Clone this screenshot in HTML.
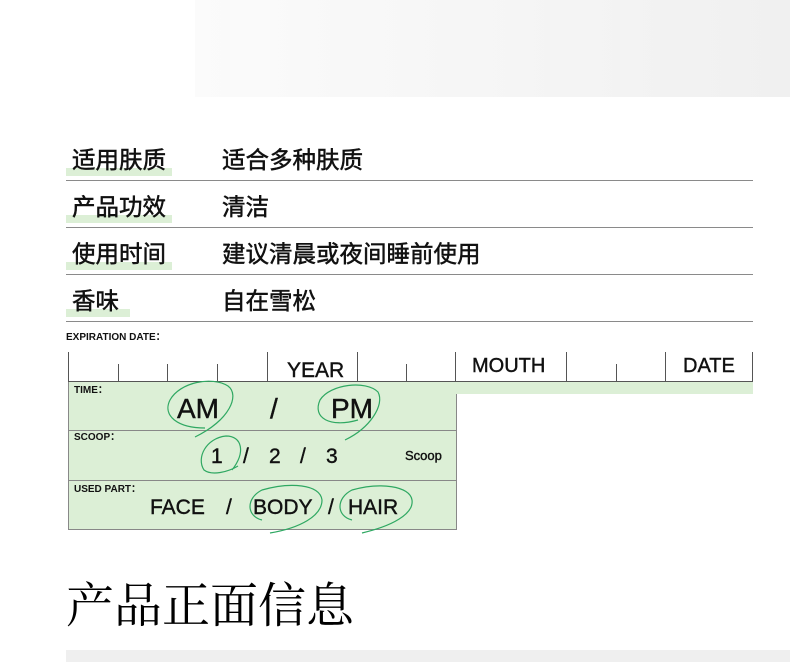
<!DOCTYPE html>
<html><head><meta charset="utf-8"><style>
*{margin:0;padding:0;box-sizing:border-box}
body{width:790px;height:662px;background:#fff;position:relative;overflow:hidden;font-family:"Liberation Sans","Noto Sans CJK SC",sans-serif;color:#111}
.a{position:absolute}
.hl{position:absolute;height:8px;background:#dcefd6}
.lbl,.val{position:absolute;font-size:23.5px;font-weight:normal;line-height:1;-webkit-text-stroke:0.5px #111}
.lbl{left:72px}.val{left:222px}
.ln{position:absolute;left:66px;width:687px;height:1px;background:#8a8a8a}
.v{position:absolute;width:1px;background:#555}
.t{position:absolute;font-size:21px;line-height:1;font-family:"Liberation Sans",sans-serif;font-weight:normal;color:#111;-webkit-text-stroke:0.4px #111}
.s{position:absolute;font-size:10px;line-height:1;font-weight:bold}
</style></head><body>
<div class="a" style="left:195px;top:0;width:595px;height:97px;background:linear-gradient(90deg,#fbfbfb,#f0f0f0)"></div>

<div class="hl" style="left:66px;top:168px;width:106px"></div>
<div class="hl" style="left:66px;top:215px;width:106px"></div>
<div class="hl" style="left:66px;top:262px;width:106px"></div>
<div class="hl" style="left:66px;top:309px;width:64px"></div>
<div class="lbl" style="top:149px">适用肤质</div><div class="val" style="top:149px">适合多种肤质</div>
<div class="ln" style="top:180px"></div>
<div class="lbl" style="top:196px">产品功效</div><div class="val" style="top:196px">清洁</div>
<div class="ln" style="top:227px"></div>
<div class="lbl" style="top:243px">使用时间</div><div class="val" style="top:243px">建议清晨或夜间睡前使用</div>
<div class="ln" style="top:274px"></div>
<div class="lbl" style="top:290px">香味</div><div class="val" style="top:290px">自在雪松</div>
<div class="ln" style="top:321px"></div>

<div class="s" style="left:66px;top:333px">EXPIRATION DATE：</div>
<div class="a" style="left:68px;top:381px;width:389px;height:149px;background:#dcefd6;border:1px solid #888"></div>
<div class="a" style="left:456px;top:381px;width:297px;height:13px;background:#dcefd6"></div>
<div class="a" style="left:68px;top:381px;width:685px;height:1px;background:#555"></div>
<div class="a" style="left:68px;top:430px;width:389px;height:1px;background:#888"></div>
<div class="a" style="left:68px;top:480px;width:389px;height:1px;background:#888"></div>
<div class="v" style="left:68px;top:352px;height:29px"></div>
<div class="v" style="left:118px;top:364px;height:17px"></div>
<div class="v" style="left:167px;top:364px;height:17px"></div>
<div class="v" style="left:217px;top:364px;height:17px"></div>
<div class="v" style="left:267px;top:352px;height:29px"></div>
<div class="v" style="left:357px;top:352px;height:29px"></div>
<div class="v" style="left:406px;top:364px;height:17px"></div>
<div class="v" style="left:455px;top:352px;height:29px"></div>
<div class="v" style="left:566px;top:352px;height:29px"></div>
<div class="v" style="left:616px;top:364px;height:17px"></div>
<div class="v" style="left:665px;top:352px;height:29px"></div>
<div class="v" style="left:752px;top:352px;height:29px"></div>
<div class="t" style="left:287px;top:360px">YEAR</div>
<div class="t" style="left:472px;top:356px;font-size:20px">MOUTH</div>
<div class="t" style="left:683px;top:356px;font-size:20px">DATE</div>

<div class="s" style="left:74px;top:386px">TIME：</div>
<div class="t" style="left:177px;top:395px;font-size:28px">AM</div>
<div class="t" style="left:270px;top:395px;font-size:28px">/</div>
<div class="t" style="left:331px;top:395px;font-size:28px">PM</div>
<div class="s" style="left:74px;top:433px">SCOOP：</div>
<div class="t" style="left:211px;top:446px">1</div>
<div class="t" style="left:243px;top:446px">/</div>
<div class="t" style="left:269px;top:446px">2</div>
<div class="t" style="left:300px;top:446px">/</div>
<div class="t" style="left:326px;top:446px">3</div>
<div class="t" style="left:405px;top:449px;font-size:13px">Scoop</div>
<div class="s" style="left:74px;top:485px">USED PART：</div>
<div class="t" style="left:150px;top:497px">FACE</div>
<div class="t" style="left:226px;top:497px">/</div>
<div class="t" style="left:253px;top:497px">BODY</div>
<div class="t" style="left:328px;top:497px">/</div>
<div class="t" style="left:348px;top:497px">HAIR</div>

<svg class="a" style="left:0;top:0" width="790" height="662" fill="none" stroke="#2fa862" stroke-width="1.2">
<path d="M195 437 C230 420 240 395 228 386 C212 376 180 382 170 400 C162 416 178 428 205 428"/>
<path d="M345 440 C370 428 385 405 378 392 C366 380 330 384 320 400 C312 418 330 428 358 420"/>
<path d="M232 470 C246 452 242 436 226 436 C206 438 196 458 204 470 C212 476 228 472 238 466"/>
<path d="M270 533 C300 528 322 516 322 500 C320 484 290 482 262 490 C246 498 246 516 262 520"/>
<path d="M362 533 C392 526 414 514 412 500 C410 486 380 482 352 490 C336 498 336 516 352 520"/>
</svg>

<div class="a" style="left:66px;top:578px;font-family:'Noto Serif CJK SC',serif;font-size:48px;line-height:1;color:#000">产品正面信息</div>
<div class="a" style="left:66px;top:650px;width:724px;height:12px;background:#efefef"></div>
</body></html>
